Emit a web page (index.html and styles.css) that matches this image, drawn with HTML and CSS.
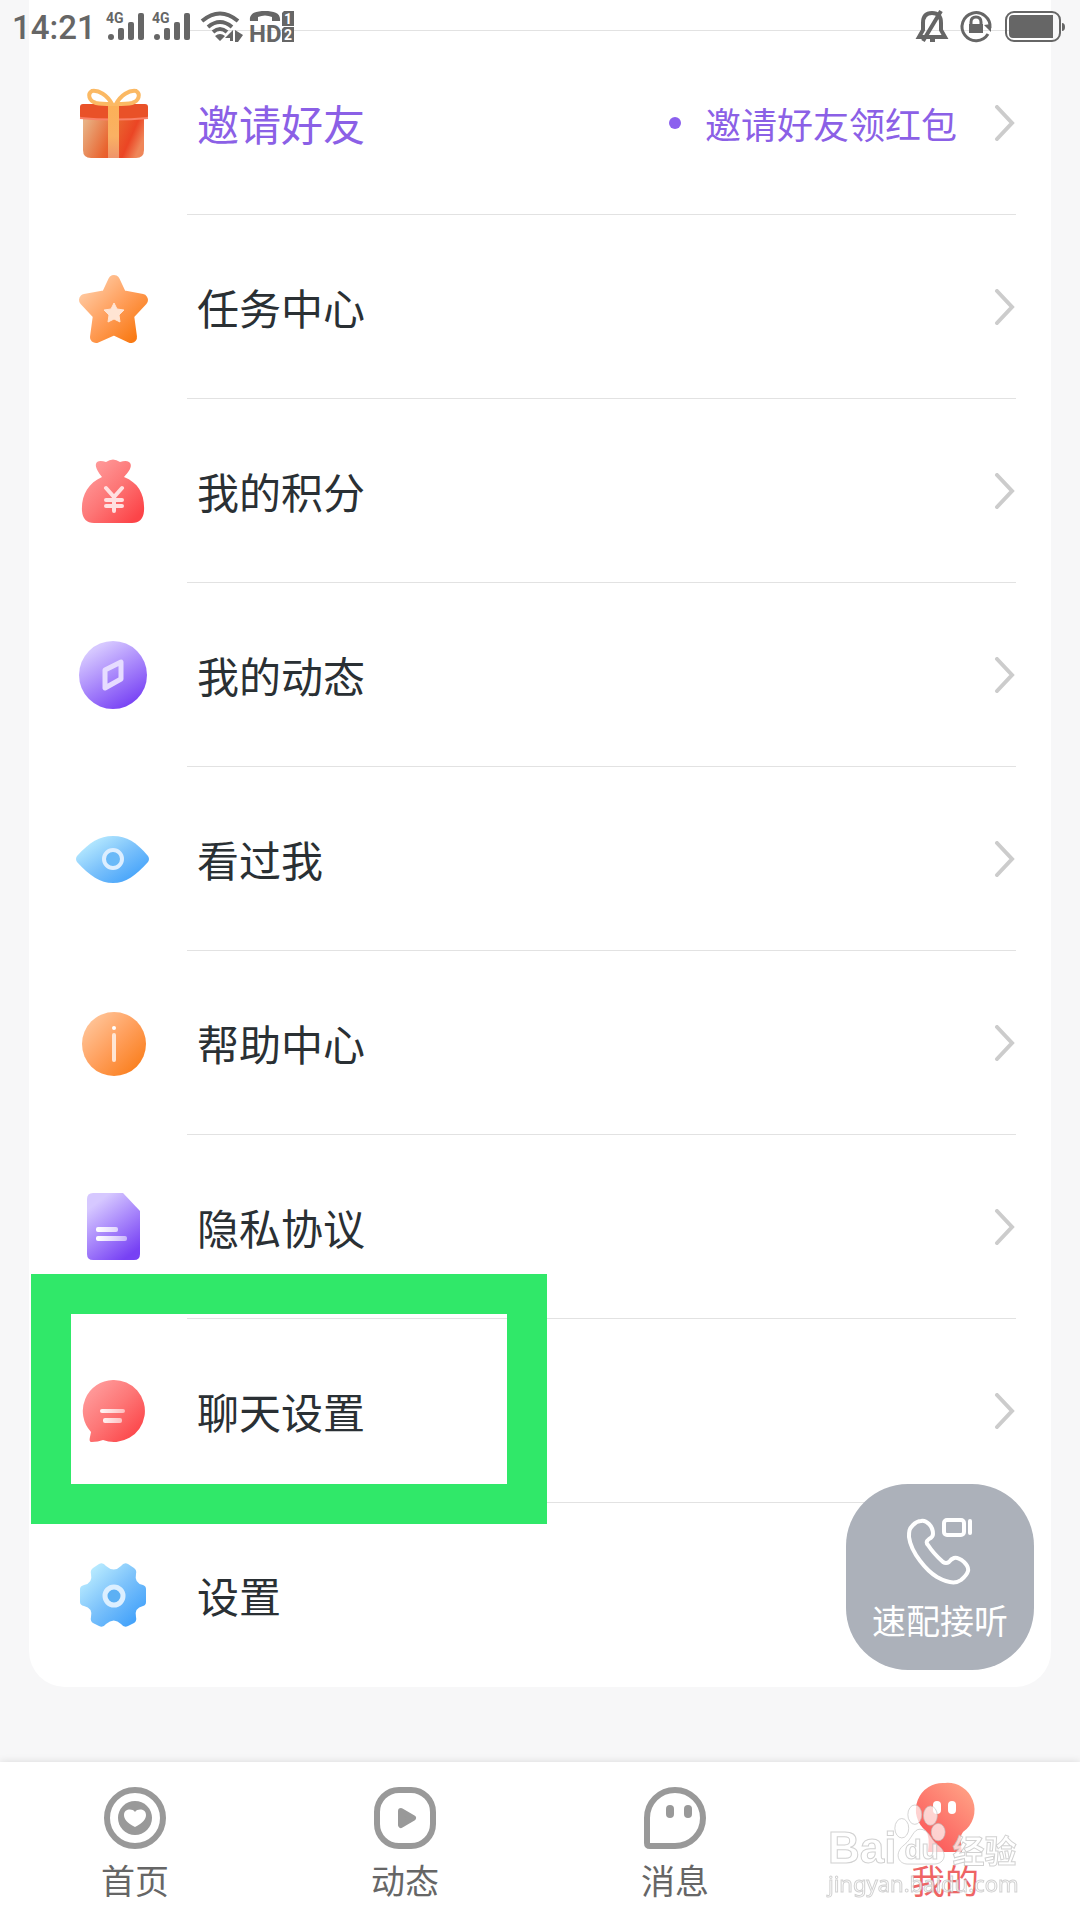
FILE: index.html
```html
<!DOCTYPE html>
<html lang="zh-CN">
<head>
<meta charset="utf-8">
<meta name="viewport" content="width=device-width, initial-scale=1">
<title>我的</title>
<link rel="stylesheet" href="styles.css">
</head>
<body>
<svg class="defs" width="0" height="0" aria-hidden="true">
  <defs>
    <linearGradient id="orange" x1="0" y1="0" x2="1" y2="1"><stop offset="0.05" stop-color="#ffcaa2"/><stop offset="0.5" stop-color="#ff9f5c"/><stop offset="0.95" stop-color="#f97a14"/></linearGradient>
    <linearGradient id="red" x1="0" y1="0" x2="1" y2="1"><stop offset="0.1" stop-color="#ff9d9d"/><stop offset="0.5" stop-color="#fd7676"/><stop offset="0.9" stop-color="#fc4448"/></linearGradient>
    <linearGradient id="purple" x1="0.2" y1="0" x2="0.8" y2="1"><stop offset="0.1" stop-color="#d6c8ff"/><stop offset="0.5" stop-color="#a988fb"/><stop offset="0.95" stop-color="#7741f4"/></linearGradient>
    <linearGradient id="blue" x1="0" y1="0" x2="1" y2="1"><stop offset="0.1" stop-color="#bdeeff"/><stop offset="0.5" stop-color="#7cc2fb"/><stop offset="0.9" stop-color="#40a0fa"/></linearGradient>
    <linearGradient id="box" x1="0" y1="0.2" x2="1" y2="0.5"><stop offset="0" stop-color="#e8b184"/><stop offset="0.5" stop-color="#e9642f"/><stop offset="0.8" stop-color="#eb4524"/><stop offset="1" stop-color="#ef8659"/></linearGradient>
    <linearGradient id="ribbon" x1="0" y1="0" x2="0" y2="1"><stop offset="0" stop-color="#fcb057"/><stop offset="0.6" stop-color="#fab163"/><stop offset="1" stop-color="#ef946b"/></linearGradient>
    <linearGradient id="me" x1="1" y1="0" x2="0.2" y2="1"><stop offset="0.1" stop-color="#ffa084"/><stop offset="1" stop-color="#fb5357"/></linearGradient>
    <linearGradient id="shine" gradientUnits="userSpaceOnUse" x1="23" y1="0" x2="55" y2="0"><stop offset="0" stop-color="#fff"/><stop offset="1" stop-color="#fff" stop-opacity="0.5"/></linearGradient>
  </defs>
</svg>

<header class="status">
  <span class="time">14:21</span>
  <svg class="signal" viewBox="0 0 38 30" width="38" height="30"><text x="0" y="11">4G</text><circle cx="5" cy="25" r="3"/><rect x="12" y="16" width="6" height="12" rx="2"/><rect x="22" y="10" width="6" height="18" rx="2"/><rect x="32" y="1" width="6" height="27" rx="2"/></svg>
  <svg class="signal" viewBox="0 0 38 30" width="38" height="30"><text x="0" y="11">4G</text><circle cx="5" cy="25" r="3"/><rect x="12" y="16" width="6" height="12" rx="2"/><rect x="22" y="10" width="6" height="18" rx="2"/><rect x="32" y="1" width="6" height="27" rx="2"/></svg>
  <svg class="wifi" viewBox="0 0 44 32" width="44" height="32"><g fill="none" stroke="#666" stroke-width="4"><path d="M2 10Q20-5 38 10"/><path d="M8 16Q20 6 32 16"/><path d="M13 21Q20 15 27 21"/></g><path d="M15 25q5-4 10 0l-5 5zM33 19v11h-3v-3h-5zM35 19l8 5-5 7h-3z"/></svg>
  <svg class="hd" viewBox="0 0 44 32" width="44" height="32"><path d="M0 10C-1 2 6 0 15 0s16 2 15 10h-8V6Q15 3 8 6v4z"/><text class="hd-text" x="-1" y="31">HD</text><path d="M34 0h10v15H32V2zM34 16h10v15H32V18z"/><text class="sim" x="34" y="13">1</text><text class="sim" x="34" y="29">2</text></svg>
  <span class="status-right">
    <svg viewBox="0 0 30 34" width="30" height="34"><path d="M2 27l4-7V13Q6 3 15 3t9 10v7l4 7zM24 1L6 31M13 30h5" fill="none" stroke="#666" stroke-width="4"/></svg>
    <svg viewBox="0 0 34 34" width="34" height="34"><path d="M29 24A14 14 0 1 1 31 18" fill="none" stroke="#666" stroke-width="3"/><path d="M25 15l7-1v8zM10 14h14v9H10z"/><path d="M12 15v-3q0-5 5-5t5 5v3" fill="none" stroke="#666" stroke-width="3"/></svg>
    <svg viewBox="0 0 60 32" width="60" height="32"><rect x="1" y="1" width="54" height="29" rx="8" fill="none" stroke="#666" stroke-width="2"/><path d="M8 4h40v23H8q-4 0-4-4V8q0-4 4-4zM57 12q3 0 3 4t-3 4z"/></svg>
  </span>
</header>

<main class="page">
  <ul class="menu">
    <li><a class="row invite" href="#invite">
      <svg class="icon" viewBox="0 0 80 80"><path d="M10 34h61v33q0 8-8 8H18q-8 0-8-8z" fill="url(#box)"/><rect x="7" y="21" width="68" height="15" rx="3" fill="#e95128"/><path d="M7 35q34 3 68 0" fill="none" stroke="#f98168" stroke-width="2"/><path d="M35 21h11v54H35z" fill="url(#ribbon)"/><path d="M39 21C34 12 26 7 19 8c-5 3-3 10 4 12 5 1 12 1 16 1zM43 21C48 12 56 7 63 8c5 3 3 10-4 12-5 1-12 1-16 1z" fill="none" stroke="#fbb964" stroke-width="4"/></svg>
      <span class="body"><span class="label">邀请好友</span><span class="hint">邀请好友领红包</span><svg class="chevron" viewBox="0 0 24 36"><path d="M5 2l15 16L5 34"/></svg></span></a></li>
    <li><a class="row" href="#tasks">
      <svg class="icon" viewBox="0 0 80 80"><path d="M41 14L48 29 69 33 55 48 58 70 41 62 23 70 26 48 12 33 34 29z" fill="url(#orange)" stroke="url(#orange)" stroke-width="12" stroke-linejoin="round"/><path d="M41 36l3 6 7 1-5 5 1 7-6-3-6 3 1-7-5-5 7-1z" fill="#ffe4d3" stroke="#ffe4d3" stroke-width="1" stroke-linejoin="round"/></svg>
      <span class="body"><span class="label">任务中心</span><svg class="chevron" viewBox="0 0 24 36"><path d="M5 2l15 16L5 34"/></svg></span></a></li>
    <li><a class="row" href="#points">
      <svg class="icon" viewBox="0 0 80 80"><path d="M29 26C24 20 21 14 24 11q3-2 9 0 7-5 14 0 6-2 9 0c4 3 1 9-5 15C66 32 72 44 71 60q-1 12-12 12H21Q10 72 9 60C8 45 15 32 29 26z" fill="url(#red)"/><path d="M33 37l8 9 8-9M41 46v14M33 49h16M33 55h16" fill="none" stroke="#ffe0e0" stroke-width="4" stroke-linecap="round"/></svg>
      <span class="body"><span class="label">我的积分</span><svg class="chevron" viewBox="0 0 24 36"><path d="M5 2l15 16L5 34"/></svg></span></a></li>
    <li><a class="row" href="#moments">
      <svg class="icon" viewBox="0 0 80 80"><circle cx="40" cy="40" r="34" fill="url(#purple)"/><path d="M32 35l16-8v17l-16 9z" fill="none" stroke="#e6dcff" stroke-width="5" stroke-linejoin="round"/></svg>
      <span class="body"><span class="label">我的动态</span><svg class="chevron" viewBox="0 0 24 36"><path d="M5 2l15 16L5 34"/></svg></span></a></li>
    <li><a class="row" href="#visitors">
      <svg class="icon" viewBox="0 0 80 80"><path d="M4 37C17 23 26 17 40 17s23 6 35 20q2 3 0 6C62 57 53 64 40 64S17 57 4 43q-2-3 0-6z" fill="url(#blue)"/><circle cx="40" cy="40" r="9" fill="#69b9f8" stroke="#dceeff" stroke-width="4"/></svg>
      <span class="body"><span class="label">看过我</span><svg class="chevron" viewBox="0 0 24 36"><path d="M5 2l15 16L5 34"/></svg></span></a></li>
    <li><a class="row" href="#help">
      <svg class="icon" viewBox="0 0 80 80"><circle cx="41" cy="41" r="32" fill="url(#orange)"/><circle cx="41" cy="25" r="2" fill="#fff"/><path d="M41 32v25" stroke="#ffe6d4" stroke-width="4" stroke-linecap="round"/></svg>
      <span class="body"><span class="label">帮助中心</span><svg class="chevron" viewBox="0 0 24 36"><path d="M5 2l15 16L5 34"/></svg></span></a></li>
    <li><a class="row" href="#privacy">
      <svg class="icon" viewBox="0 0 80 80"><path d="M20 6h30l17 18v43q0 6-6 6H20q-6 0-6-6V12q0-6 6-6z" fill="url(#purple)"/><rect x="23" y="40" width="22" height="5" rx="2" fill="url(#shine)"/><rect x="23" y="49" width="31" height="5" rx="2" fill="url(#shine)"/></svg>
      <span class="body"><span class="label">隐私协议</span><svg class="chevron" viewBox="0 0 24 36"><path d="M5 2l15 16L5 34"/></svg></span></a></li>
    <li class="marked"><a class="row" href="#chat">
      <svg class="icon" viewBox="0 0 80 80"><path d="M40 9a31 31 0 1 1-10 60q-5 2-11 2c-4 0-2-4-1-10A31 31 0 0 1 40 9z" fill="url(#red)"/><rect x="27" y="38" width="25" height="4" rx="2" fill="url(#shine)"/><rect x="30" y="47" width="19" height="5" rx="2" fill="url(#shine)"/></svg>
      <span class="body"><span class="label">聊天设置</span><svg class="chevron" viewBox="0 0 24 36"><path d="M5 2l15 16L5 34"/></svg></span></a></li>
    <li><a class="row" href="#settings">
      <svg class="icon" viewBox="0 0 80 80"><path d="M33 11Q41 18 48 11q3-4 7-2l6 4q3 2 2 6-2 9 7 11 3 1 3 4v13q0 3-3 4-9 2-7 11 1 4-2 6l-6 3q-4 2-7-2-7-7-15 0-3 4-7 2l-6-3q-3-2-2-6 2-9-7-11-4-1-4-4V34q0-3 4-4 9-2 7-11-1-4 2-6l6-4q4-2 7 2z" fill="url(#blue)"/><circle cx="41" cy="41" r="9" fill="#5cb0f4" stroke="#dcefff" stroke-width="5"/></svg>
      <span class="body"><span class="label">设置</span></span></a></li>
  </ul>
</main>

<button class="match" type="button">
  <svg viewBox="0 0 66 68" width="66" height="68" fill="none" stroke="#fff" stroke-width="4" stroke-linejoin="round" stroke-linecap="round"><path d="M14 4Q10 4 6 8C2 12 2 14 2 20 4 36 20 54 30 60Q46 69 54 63 60 58 61 54 62 50 57 45 51 40 47 41 44 42 42 45 39 47 36 45 26 36 21 28 18 25 22 22 26 20 26 17 26 11 22 7 18 3 14 4z"/><rect x="37" y="3" width="20" height="15" rx="3"/><path d="M63 4v12" stroke-width="4"/></svg>
  <span>速配接听</span>
</button>

<nav class="tabs">
  <a href="#home"><svg viewBox="0 0 64 64"><circle cx="32" cy="32" r="28" fill="none" stroke="#999" stroke-width="6"/><circle cx="32" cy="32" r="17" fill="#999"/><path d="M32 41C24 37 21 33 21 29c0-6 8-7 11-3 3-4 11-3 11 3 0 4-3 8-11 12z" fill="#fff"/></svg><span>首页</span></a>
  <a href="#feed"><svg viewBox="0 0 64 64"><rect x="4" y="4" width="56" height="56" rx="22" fill="none" stroke="#999" stroke-width="6"/><path d="M28 25l12 7-12 7z" fill="#999" stroke="#999" stroke-width="6" stroke-linejoin="round"/></svg><span>动态</span></a>
  <a href="#messages"><svg viewBox="0 0 64 64"><path d="M4 57V32A28 28 0 1 1 32 60H7q-3 0-3-3z" fill="none" stroke="#999" stroke-width="6"/><rect x="23" y="19" width="8" height="13" rx="4" fill="#999"/><rect x="41" y="19" width="8" height="13" rx="4" fill="#999"/></svg><span>消息</span></a>
  <a class="active" href="#me" aria-current="page"><svg viewBox="0 0 64 64"><path d="M32-3A27 27 0 0 1 50 46Q46 50 49 66H15Q17 50 13 45A27 27 0 0 1 32-3z" fill="url(#me)"/><rect x="20" y="15" width="8" height="13" rx="4" fill="#fff"/><rect x="35" y="15" width="8" height="13" rx="4" fill="#fff"/></svg><span>我的</span></a>
</nav>

<div class="watermark">
  <div class="brand"><span class="bai">Bai</span><span class="paw"><svg viewBox="0 0 60 64" width="52" height="62" preserveAspectRatio="none"><ellipse cx="9" cy="25" rx="8" ry="10"/><ellipse cx="24" cy="11" rx="8" ry="10"/><ellipse cx="42" cy="12" rx="8" ry="10"/><ellipse cx="51" cy="29" rx="8" ry="9"/><path d="M30 26C22 26 21 36 12 42 0 50 4 62 16 62H46C60 62 62 49 50 42 42 36 40 26 30 26z"/></svg><span class="du">du</span></span><span class="cn">经验</span></div>
  <div class="site">jingyan.baidu.com</div>
</div>
</body>
</html>
```
FILE: styles.css
```css
*, *::before, *::after { box-sizing: border-box; }

body {
  margin: 0;
  min-height: 100vh;
  display: flex;
  flex-direction: column;
  background: #f7f7f8;
  color: #2a3034;
  font-family: "Noto Sans CJK SC", sans-serif;
}

a { color: inherit; text-decoration: none; }
svg { display: block; flex: none; }
.defs { position: absolute; }

/* The status bar floats over the scrolled list. */
.status {
  position: absolute;
  inset: 0 0 auto;
  z-index: 2;
  height: 54px;
  padding: 0 15px 0 12px;
  display: flex;
  align-items: center;
  gap: 8px;
  color: #666;
  fill: #666;
  font-family: Roboto, sans-serif;
}
.status svg { overflow: visible; }
.time { width: 86px; font-size: 33px; font-weight: 500; }
.signal text { font-size: 14px; font-weight: 700; }
.wifi { margin-left: 2px; }
.hd { margin-left: -2px; }
.hd-text { font-size: 24px; font-weight: 700; }
.sim { font-size: 14px; font-weight: 700; fill: #fff; }
.status-right { margin-left: auto; display: flex; align-items: center; gap: 12px; }

.page { padding: 0 29px; }
.menu {
  margin: 0;
  padding: 30px 35px 0 44px;
  list-style: none;
  background: #fff;
  border-radius: 0 0 36px 36px;
}
.row { display: flex; align-items: stretch; gap: 34px; height: 184px; }
.icon { width: 80px; height: 80px; align-self: center; }
.body {
  flex: 1;
  display: flex;
  align-items: center;
  gap: 35px;
  padding-left: 10px;
  border-bottom: 1px solid #e2e2e2;
}
.menu li:first-child .row { height: 185px; }
.menu li:first-child .body { border-top: 1px solid #e2e2e2; }
.menu li:last-child .body { border-bottom: 0; }
.label { flex: 1; font-size: 42px; line-height: 60px; }
.hint { display: flex; align-items: center; gap: 24px; font-size: 36px; line-height: 52px; }
.hint::before { content: ""; width: 12px; height: 12px; border-radius: 50%; background: #8b60ee; }
.invite { color: #8b60e6; }
.chevron { width: 24px; height: 36px; fill: none; stroke: #ccc; stroke-width: 4; stroke-linecap: round; }

.marked { position: relative; }
.marked::after {
  content: "";
  position: absolute;
  top: -45px;
  left: -42px;
  width: 516px;
  height: 250px;
  border: 40px solid #30e869;
  pointer-events: none;
}

.match {
  position: fixed;
  right: 46px;
  bottom: 250px;
  width: 188px;
  height: 186px;
  padding: 8px 0 0;
  border: 0;
  border-radius: 62px;
  background: #acb1ba;
  color: #fff;
  display: flex;
  flex-direction: column;
  align-items: center;
  justify-content: center;
  gap: 10px;
  font: 34px/50px "Noto Sans CJK SC", sans-serif;
}

.tabs {
  margin-top: auto;
  height: 158px;
  padding-top: 24px;
  display: grid;
  grid-template-columns: repeat(4, 1fr);
  background: #fff;
  box-shadow: 0 0 8px rgba(0, 0, 0, 0.12);
  color: #666;
  font-size: 34px;
  line-height: 44px;
}
.tabs a { display: flex; flex-direction: column; align-items: center; gap: 8px; }
.tabs svg { width: 64px; height: 64px; overflow: visible; }
.tabs .active { color: #ee6464; }

.watermark {
  position: fixed;
  right: 58px;
  bottom: 20px;
  width: 194px;
  color: rgba(255, 255, 255, 0.7);
  -webkit-text-stroke: 1px rgba(190, 190, 190, 0.7);
  font-family: "Liberation Sans", sans-serif;
  pointer-events: none;
}
.brand { display: flex; align-items: flex-end; height: 62px; font-weight: 700; }
.bai { font-size: 44px; line-height: 36px; }
.paw { position: relative; margin: 0 6px 0 -2px; }
.paw svg { fill: rgba(255, 255, 255, 0.7); stroke: rgba(190, 190, 190, 0.7); }
.du { position: absolute; left: 10px; bottom: 2px; font-size: 28px; line-height: 28px; }
.cn { font: 700 32px/34px "Noto Sans CJK SC", sans-serif; }
.site { font: 22px/34px "Noto Sans", sans-serif; }
```
